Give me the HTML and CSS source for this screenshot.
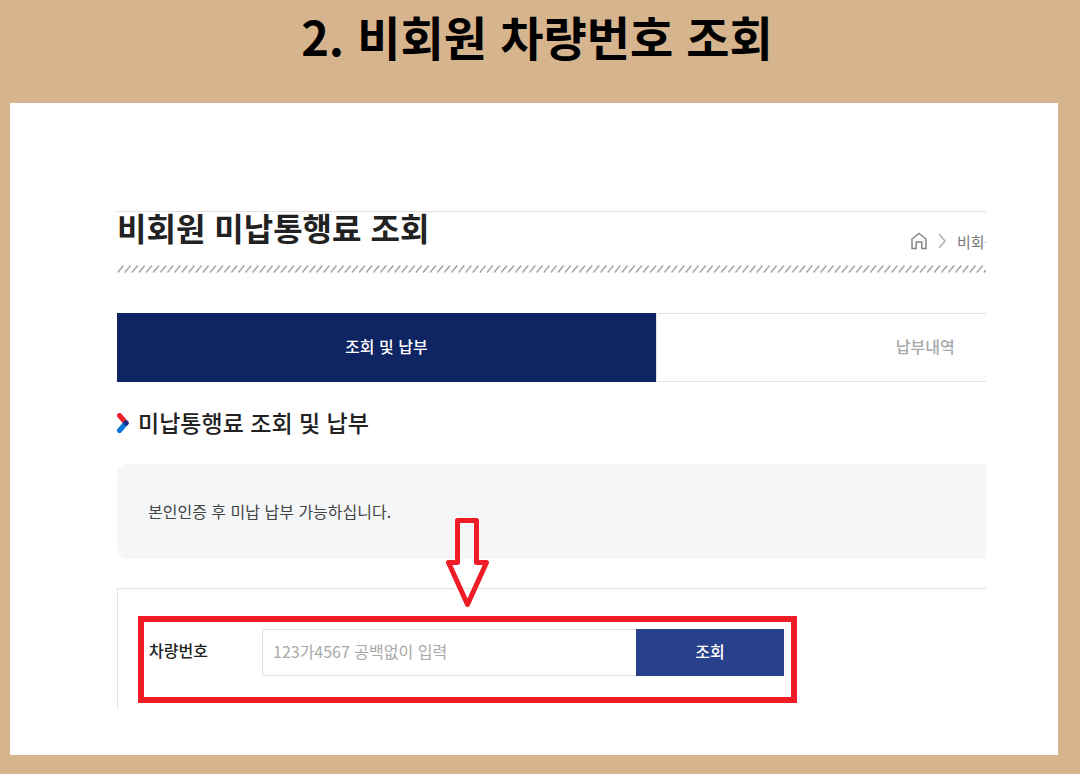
FILE: index.html
```html
<!DOCTYPE html>
<html lang="ko">
<head>
    <meta charset="UTF-8">
    <meta name="viewport" content="width=device-width, initial-scale=1.0">
    <title>비회원 차량번호 조회</title>
    <link rel="stylesheet" href="styles.css">
</head>
<body>

    <h1 class="step-title">2. 비회원 차량번호 조회</h1>

    <main class="card">
        <div class="page">
            <!-- 페이지 제목과 현재 위치 -->
            <header class="page-header">
                <h2>비회원 미납통행료 조회</h2>
                <nav class="breadcrumb" aria-label="현재 위치">
                    <a href="#" aria-label="홈">
                        <svg width="16" height="18" viewBox="0 0 16 18" fill="none" stroke="#858585" stroke-width="1.5">
                            <path d="M1 7 L8 1.500 L15 7 V16.500 H10.800 V10 H5.200 V16.500 H1 Z"/>
                        </svg>
                    </a>
                    <svg width="8" height="16" viewBox="0 0 8 16" fill="none" stroke="#b0b0b0" stroke-width="1.5">
                        <path d="M1 1 L7 8 L1 15"/>
                    </svg>
                    <a href="#">비회원</a>
                </nav>
            </header>
            <svg class="hatch" aria-hidden="true">
                <defs>
                    <pattern id="slash" width="7.1" height="8" patternUnits="userSpaceOnUse">
                        <path d="M0.700 7.500 L6.500 0.500" stroke="#999" stroke-width="1.2"/>
                    </pattern>
                </defs>
                <rect width="100%" height="8" fill="url(#slash)"/>
            </svg>

            <div class="wide">
                <div class="tabs">
                    <button type="button" class="tab active">조회 및 납부</button>
                    <button type="button" class="tab">납부내역</button>
                </div>

                <h3 class="section-title">
                    <svg width="12" height="20" viewBox="0 0 12 20" fill="none" stroke-width="5" stroke-linecap="round">
                        <path d="M2.500 2.500 L9 10" stroke="#f0202c"/>
                        <path d="M2.500 17.500 L9 10" stroke="#0a74d8"/>
                        <circle cx="9" cy="10" r="2.500" fill="#1c2a86"/>
                    </svg>
                    <span>미납통행료 조회 및 납부</span>
                </h3>

                <p class="notice">본인인증 후 미납 납부 가능하십니다.</p>

                <form class="search">
                    <div class="search-row">
                        <label for="carNumber">차량번호</label>
                        <input type="text" id="carNumber" placeholder="123가4567 공백없이 입력">
                        <button type="submit">조회</button>
                        <!-- 입력란 안내 화살표 -->
                        <svg class="arrow" width="46" height="92" viewBox="0 0 46 92" fill="none" stroke="#ee1c25" stroke-width="5" stroke-linejoin="round" aria-hidden="true">
                            <path d="M12.500 3.500 H31.500 V45.500 H41.500 L22.500 87.500 L3.500 45.500 H12.500 Z"/>
                        </svg>
                    </div>
                </form>
            </div>
        </div>
    </main>

</body>
</html>
```
FILE: styles.css
```css
* {
    box-sizing: border-box;
}
body {
    display: flex;
    flex-direction: column;
    min-height: 100vh;
    margin: 0;
    padding: 0 22px 19px 10px;
    background-color: #d6b58e;
    font-family: 'Noto Sans CJK KR', 'Noto Sans', sans-serif;
    font-size: 16px;
    color: #222;
}
h1, h2, h3, p {
    margin: 0;
}
a {
    color: inherit;
    text-decoration: none;
}
button, input {
    font: inherit;
}
.step-title {
    height: 103px;
    padding: 2px 0 0 6px;
    line-height: 68px;
    font-size: 47px;
    font-weight: 700;
    text-align: center;
    color: #000;
}

/* Card */
.card {
    flex: 1;
    padding: 108px 72px 44px 107px;
    background-color: #fff;
}
.page {
    overflow: hidden;
    border-top: 1px solid #e3dfdc;
}
.page-header {
    display: flex;
    justify-content: space-between;
    height: 53px;
}
.page-header h2 {
    font-size: 32px;
    line-height: 30px;
    font-weight: 700;
    white-space: nowrap;
}
.breadcrumb {
    display: flex;
    flex: 0 0 75px;
    align-items: center;
    gap: 11px;
    height: 58px;
    overflow: hidden;
    white-space: nowrap;
    font-size: 15px;
    color: #777;
}
.breadcrumb svg {
    display: block;
    flex: none;
}
.hatch {
    display: block;
    width: 100%;
    height: 8px;
}

/* The content is wider than the visible area */
.wide {
    width: 124%;
    padding-top: 40px;
}
.tabs {
    display: flex;
}
.tab {
    flex: 1;
    height: 69px;
    padding: 0 0 3px;
    border: 1px solid #e3e3e3;
    background-color: #fff;
    color: #a8a8a8;
    font-weight: 500;
    cursor: pointer;
}
.tab.active {
    border-color: #0f2463;
    background-color: #0f2463;
    color: #fff;
}
.section-title {
    display: flex;
    align-items: center;
    gap: 9px;
    height: 82px;
    font-size: 23px;
    font-weight: 500;
}
.section-title span {
    padding-bottom: 3px;
}
.notice {
    padding: 31px;
    border-radius: 10px;
    background-color: #f4f6f8;
    line-height: 33px;
    color: #444;
}

/* Search form */
.search {
    margin-top: 29px;
    padding: 27px 20px 7px;
    border: 1px solid #e3e3e3;
    border-bottom: none;
}
.search-row {
    position: relative;
    display: flex;
    max-width: 659px;
    padding: 7px 7px 21px 5px;
    border: 6px solid #ee1c25;
}
.search-row label {
    width: 113px;
    line-height: 43px;
    font-weight: 500;
}
.search-row input {
    flex: 1;
    min-width: 0;
    height: 47px;
    padding: 0 10px 4px;
    border: 1px solid #e0e0e0;
    border-right: none;
    background-color: #fff;
}
.search-row input::placeholder {
    color: #a8a8a8;
}
.search-row button {
    width: 148px;
    padding: 0 0 4px;
    border: none;
    background-color: #27408b;
    color: #fff;
    font-weight: 500;
    cursor: pointer;
}
.arrow {
    position: absolute;
    top: -105px;
    left: 301px;
}
```
